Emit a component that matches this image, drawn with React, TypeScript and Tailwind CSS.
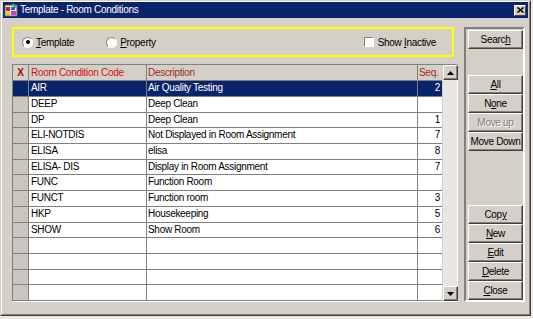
import React from 'react';

const rows: [string, string, string][] = [
  ['AIR', 'Air Quality Testing', '2'],
  ['DEEP', 'Deep Clean', ''],
  ['DP', 'Deep Clean', '1'],
  ['ELI-NOTDIS', 'Not Displayed in Room Assignment', '7'],
  ['ELISA', 'elisa', '8'],
  ['ELISA- DIS', 'Display in Room Assignment', '7'],
  ['FUNC', 'Function Room', ''],
  ['FUNCT', 'Function room', '3'],
  ['HKP', 'Housekeeping', '5'],
  ['SHOW', 'Show Room', '6'],
  ['', '', ''],
  ['', '', ''],
  ['', '', ''],
  ['', '', ''],
];

// row pitch in the original is ~15.7px, so alternate 16/16/15
const rowH = ['h-[16px]', 'h-[16px]', 'h-[15px]', 'h-[16px]', 'h-[16px]', 'h-[15px]', 'h-[16px]', 'h-[16px]', 'h-[16px]', 'h-[15px]', 'h-[16px]', 'h-[16px]', 'h-[15px]', 'h-[16px]'];

const raised =
  'border border-t-white border-l-white border-r-[#404040] border-b-[#404040] shadow-[inset_-1px_-1px_0_#808080] bg-[#d4d0c8]';

const Btn: React.FC<{ label: React.ReactNode; disabled?: boolean }> = ({ label, disabled }) => (
  <div
    className={`${raised} w-[55px] h-[19px] flex items-center justify-center whitespace-nowrap leading-none ${
      disabled ? 'text-[#808080] [text-shadow:1px_1px_0_#fff]' : 'text-black'
    }`}
  >
    {label}
  </div>
);

const U: React.FC<{ children: React.ReactNode }> = ({ children }) => <span className="underline underline-offset-[1px]">{children}</span>;

const Radio: React.FC<{ checked?: boolean }> = ({ checked }) => (
  <div className="w-[11px] h-[11px] rounded-full border border-t-[#808080] border-l-[#808080] border-r-white border-b-white bg-white flex items-center justify-center">
    {checked && <div className="w-[4px] h-[4px] rounded-full bg-black" />}
  </div>
);

const Arrow: React.FC<{ up?: boolean }> = ({ up }) => (
  <div className={`${raised} w-[15px] h-[15px] flex items-center justify-center`}>
    <svg width="7" height="4" viewBox="0 0 7 4">
      {up ? <path d="M3.5 0 L7 4 L0 4 Z" fill="#000" /> : <path d="M0 0 L7 0 L3.5 4 Z" fill="#000" />}
    </svg>
  </div>
);

export default function App() {
  return (
    <div className="w-[533px] h-[319px] bg-[#ece9e4] font-['Liberation_Sans',Arial,sans-serif] text-[10px] tracking-[-0.3px]">
      <div className="w-[531px] h-[316px] bg-[#d4d0c8] border border-t-[#d4d0c8] border-l-[#d4d0c8] border-r-[#404040] border-b-[#404040] flex flex-col">
        <div className="flex-1 flex flex-col border border-t-white border-l-white border-r-[#808080] border-b-[#808080] px-[1px]">
          {/* title bar */}
          <div className="h-[16px] bg-[#0a246a] flex items-center pl-[1px] pr-[2px]">
            <svg width="14" height="14" viewBox="0 0 14 14" className="mr-[2px]">
              <rect x="1" y="2" width="12" height="11" fill="#f2f2f2" stroke="#5a5a5a" strokeWidth="1" />
              <rect x="2" y="4" width="4" height="4" fill="#d81e1e" />
              <rect x="7" y="4" width="4" height="3" fill="#2a5bd7" />
              <rect x="2" y="9" width="4" height="3" fill="#f4c21b" />
              <rect x="7" y="8" width="5" height="4" fill="#c23bd4" />
              <path d="M9 0 L13 4 L11 5 L8 2 Z" fill="#3cae3c" />
            </svg>
            <span className="text-white text-[10px] leading-none">Template - Room Conditions</span>
            <div className="ml-auto w-[12px] h-[11px] border border-t-white border-l-white border-r-[#404040] border-b-[#404040] bg-[#d4d0c8] flex items-center justify-center">
              <svg width="7" height="6" viewBox="0 0 7 6">
                <path d="M0.5 0.5 L6.5 5.5 M6.5 0.5 L0.5 5.5" stroke="#000" strokeWidth="1.6" />
              </svg>
            </div>
          </div>

          {/* body */}
          <div className="flex flex-1 pt-[9px] pl-[9px] gap-[6px]">
            <div className="flex flex-col w-[446px]">
              {/* filter box */}
              <div className="w-[442px] h-[30px] border-2 border-[#ffff00] flex items-center text-black">
                <div className="flex items-center ml-[8px] gap-[3px]">
                  <Radio checked />
                  <span><U>T</U>emplate</span>
                </div>
                <div className="flex items-center ml-[32px] gap-[3px]">
                  <Radio />
                  <span><U>P</U>roperty</span>
                </div>
                <div className="flex items-center ml-auto mr-[16px] gap-[4px]">
                  <div className="w-[10px] h-[10px] bg-white border border-t-[#808080] border-l-[#808080] border-r-white border-b-white" />
                  <span>Show <U>I</U>nactive</span>
                </div>
              </div>

              {/* grid */}
              <div className="mt-[7px] flex border border-t-[#808080] border-l-[#808080] border-r-white border-b-white">
                <div className="flex flex-col w-[429px]">
                  <div className="h-[16px] flex bg-[#d4d0c8] border-b border-[#808080] leading-[15px]">
                    <div className="w-[16px] border-r border-[#808080] text-center font-bold text-[#b00000]">X</div>
                    <div className="w-[118px] border-r border-[#808080] pl-[2px] text-[#d01010]">Room Condition Code</div>
                    <div className="w-[271px] border-r border-[#808080] pl-[1px] text-[#9a2a2a]">Description</div>
                    <div className="w-[24px] pl-[1px] text-[#9a2a2a]">Seq.</div>
                  </div>
                  {rows.map((r, i) => {
                    const sel = i === 0;
                    return (
                      <div key={i} className={`${rowH[i]} flex border-b border-[#808080] leading-[14px] ${sel ? 'bg-[#0a246a] text-white' : 'bg-white text-black'}`}>
                        <div className={`w-[16px] border-r border-[#808080] ${sel ? 'bg-[#0a246a]' : 'bg-[#c9c6c0]'}`} />
                        <div className="w-[118px] border-r border-[#808080] pl-[2px]">{r[0]}</div>
                        <div className="w-[271px] border-r border-[#808080] pl-[1px]">{r[1]}</div>
                        <div className="w-[24px] text-right pr-[2px]">{r[2]}</div>
                      </div>
                    );
                  })}
                </div>
                {/* scrollbar */}
                <div className="w-[15px] flex flex-col bg-[#e8e6e2] border-l border-[#d4d0c8]">
                  <Arrow up />
                  <div className="flex-1" />
                  <Arrow />
                </div>
              </div>
            </div>

            {/* right panel */}
            <div className="w-[61px] h-[275px] border-2 border-t-[#808080] border-l-[#808080] border-r-white border-b-white flex flex-col pl-[2px] pt-[1px]">
              <Btn label={<span>Searc<U>h</U></span>} />
              <div className="flex flex-col mt-[26px]">
                <Btn label={<span><U>A</U>ll</span>} />
                <Btn label={<span>N<U>o</U>ne</span>} />
                <Btn label="Move up" disabled />
                <Btn label="Move Down" />
              </div>
              <div className="flex flex-col mt-auto">
                <Btn label={<span>Cop<U>y</U></span>} />
                <Btn label={<span><U>N</U>ew</span>} />
                <Btn label={<span><U>E</U>dit</span>} />
                <Btn label={<span><U>D</U>elete</span>} />
                <Btn label={<span><U>C</U>lose</span>} />
              </div>
            </div>
          </div>
        </div>
      </div>
    </div>
  );
}
